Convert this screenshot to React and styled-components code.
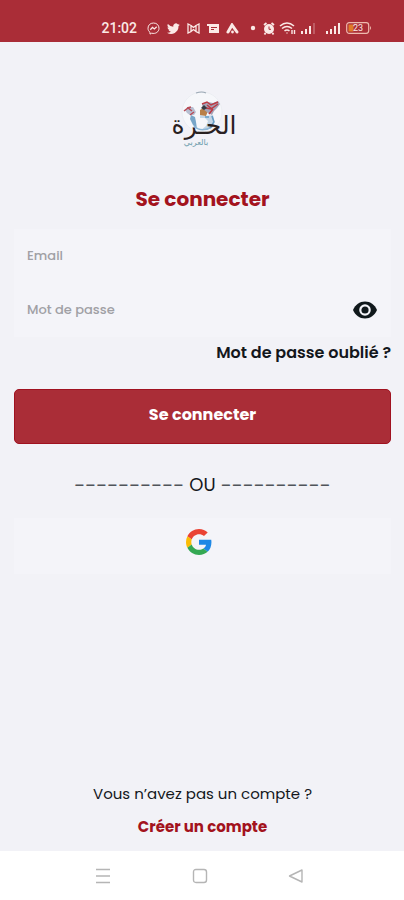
import React, { useState } from "react";
import styled, { createGlobalStyle } from "styled-components";

const GlobalStyle = createGlobalStyle`
  *, *::before, *::after { box-sizing: border-box; }
  body {
    margin: 0;
    background: #f2f2f7;
    color: #14171c;
    font-family: Poppins, Inter, sans-serif;
  }
  button, input { font: inherit; }
`;

const Screen = styled.div`
  display: flex;
  flex-direction: column;
  min-height: 100vh;
`;

const StatusBar = styled.header`
  display: flex;
  align-items: center;
  justify-content: flex-end;
  gap: 8px;
  height: 42px;
  padding: 14px 32px 0 0;
  background: #aa2d37;
  color: #fbe9e6;
`;

const Clock = styled.time`
  margin-right: 2px;
  font-family: Roboto, sans-serif;
  font-size: 14px;
  line-height: 20px;
  font-weight: 500;
`;

const Signals = styled.div`
  display: flex;
  align-items: center;
  gap: ${({ $gap }) => $gap}px;
`;

const Main = styled.main`
  display: flex;
  flex: 1;
  flex-direction: column;
  align-items: center;
  padding: 48px 13px 12px 14px;
`;

const Title = styled.h1`
  margin: 36px 0 15px;
  color: #a3131d;
  font-size: 20px;
  line-height: 30px;
  font-weight: 700;
`;

const Form = styled.form`
  display: flex;
  flex-direction: column;
  width: 100%;
`;

const Field = styled.div`
  display: flex;
  align-items: center;
  height: 54px;
  padding: 0 13px;
  background: #f4f4f9;
`;

const Input = styled.input`
  flex: 1;
  min-width: 0;
  padding: 0;
  border: 0;
  outline: 0;
  background: transparent;
  font-size: 13px;
  line-height: 20px;
  font-weight: 500;
  &::placeholder { color: #a0a0a5; opacity: 1; }
`;

const IconButton = styled.button`
  display: flex;
  padding: 0;
  border: 0;
  background: none;
  color: #10181c;
  cursor: pointer;
`;

const TextLink = styled.a`
  color: ${({ $accent }) => ($accent ? "#a3131d" : "#14171c")};
  font-size: ${({ $accent }) => ($accent ? 15 : 16)}px;
  line-height: 24px;
  font-weight: ${({ $accent }) => ($accent ? 700 : 600)};
  text-decoration: none;
`;

const ForgotRow = styled.div`
  display: flex;
  justify-content: flex-end;
  padding: 4px 0 24px;
`;

const SubmitButton = styled.button`
  height: 55px;
  padding: 0 0 4px;
  border: 1px solid #a01220;
  border-radius: 5px;
  background: #aa2d37;
  color: #fff;
  font-size: 16px;
  font-weight: 700;
  cursor: pointer;
`;

const Separator = styled.p`
  display: flex;
  align-items: center;
  gap: 5px;
  margin: 28px 0 20px;
  font-size: 18px;
  line-height: 26px;
`;

const Dashes = styled.span`
  color: #50545a;
  font-size: 20px;
`;

const GoogleButton = styled.button`
  display: flex;
  align-items: flex-start;
  justify-content: center;
  width: 100%;
  height: 56px;
  padding: 11px 8px 0 0;
  border: 0;
  background: #f4f4f9;
  cursor: pointer;
`;

const Footer = styled.footer`
  display: flex;
  flex-direction: column;
  align-items: center;
  gap: 9px;
  margin-top: auto;
`;

const Question = styled.p`
  margin: 0;
  font-size: 15px;
  line-height: 24px;
`;

const NavBar = styled.nav`
  display: flex;
  align-items: center;
  justify-content: space-between;
  height: 49px;
  padding: 0 100px 0 95px;
  background: #fff;
`;

const NavButton = styled(IconButton)`
  color: #b5b5b5;
`;

const LogoArt = styled.svg`
  display: block;
  overflow: visible;
`;

function Logo() {
  return (
    <LogoArt width="66" height="58" viewBox="0 0 66 58" role="img" aria-label="الحرة بالعربي">
      <circle cx="32" cy="22" r="20" fill="#f6f7fa" stroke="#e6e9ef" strokeWidth="0.6" />
      <path d="M26 3q6-2 10 0" fill="none" stroke="#9ba8b4" strokeWidth="1.2" />
      <path d="M15 20l4-3 4 0 3 5-2 3-4 0-3-2z" fill="#b7bfd1" />
      <path d="M14 21l4-3 4 3M20 25l4-3M17 18l4-1" fill="none" stroke="#b84c57" strokeWidth="1.5" />
      <path d="M21 25l4 2 1 5 1 7-4-4-3-6z" fill="#78a6c8" />
      <path d="M30 25l6 1 7-1 1 5-1 6-6 4-6 0 5-4 2-5-3-3-5 0z" fill="#c3d6e6" />
      <path d="M24 36q7 7 18 1" fill="none" stroke="#8db7d6" strokeWidth="1.5" />
      <path d="M30 20l5-3 3 4-2 5-6-1z" fill="#b98048" />
      <path d="M32 14l6-2 5 1 5-2 2 3-3 4-3 3-2 4-4-2-5-4z" fill="#a5a4b7" />
      <path d="M32 14l5-2 4 3 7-3M36 18l5 1 7-5M39 24l4-5M37 15l5 4" fill="none" stroke="#bd3a43" strokeWidth="1.5" />
      <path d="M42 26l2 6-4 6M35 27l4 0" fill="none" stroke="#659dc5" strokeWidth="1.6" />
      <path d="M31 18l3-3 3 3-3 2z" fill="#363a42" />
      <text x="34" y="44" textAnchor="middle" direction="rtl" fontFamily="DejaVu Sans, sans-serif" fontSize="25" fill="#29211f">الحـرة</text>
      <text x="26" y="55" textAnchor="middle" direction="rtl" fontFamily="DejaVu Sans, sans-serif" fontSize="8" fill="#679aaa">بالعربي</text>
    </LogoArt>
  );
}

function MessengerIcon() {
  return (
    <svg width="13" height="13" viewBox="0 0 13 13" fill="none" stroke="currentColor" aria-hidden="true">
      <path d="M6.500 1C3.200 1 1 3.200 1 6.300c0 1.700.7 3 2 4v1.800l1.700-.9c3.900 1 7.300-1.300 7.300-4.900C12 3.200 9.800 1 6.500 1z" />
      <path d="M3.300 7.800l2.200-2.400 1.900 1.500 2.300-2.100" strokeWidth="1.300" />
    </svg>
  );
}

function TwitterIcon() {
  return (
    <svg width="13" height="13" viewBox="0 0 24 24" fill="currentColor" aria-hidden="true">
      <path d="M23.600 4.900a9.500 9.500 0 0 1-2.700.8 4.800 4.800 0 0 0 2.100-2.700 9.600 9.600 0 0 1-3.100 1.200 4.800 4.800 0 0 0-8.200 4.400A13.700 13.700 0 0 1 1.700 3.600a4.800 4.800 0 0 0 1.500 6.500 4.800 4.800 0 0 1-2.200-.6c0 2.400 1.700 4.400 3.900 4.800a4.800 4.800 0 0 1-2.200.1 4.800 4.800 0 0 0 4.500 3.400A9.700 9.700 0 0 1 0 19.700 13.700 13.700 0 0 0 21.200 7.500a9.800 9.800 0 0 0 2.400-2.600z" />
    </svg>
  );
}

function CutMailIcon() {
  return (
    <svg width="13" height="11" viewBox="0 0 13 11" fill="none" stroke="currentColor" strokeWidth="1.300" aria-hidden="true">
      <path d="M4 2.500L1 1v9l3-1.500zM9 2.500L12 1v9L9 8.500zM4 2.500l2.500 2L9 2.500M4 8.500l2.500-2 2.500 2" />
    </svg>
  );
}

function NewsIcon() {
  return (
    <svg width="12" height="11" viewBox="0 0 12 11" aria-hidden="true">
      <path d="M0 1h12v9H2V3H0z" fill="currentColor" />
      <path d="M4 4.500h6M4 6.500h3" stroke="#aa2d37" strokeWidth="1" />
    </svg>
  );
}

function PeakIcon() {
  return (
    <svg width="13" height="11" viewBox="0 0 13 11" fill="none" stroke="currentColor" strokeLinecap="round" aria-hidden="true">
      <path d="M2 9L6 2l5 7" strokeWidth="3" />
      <circle cx="6.500" cy="9" r="1.400" fill="currentColor" stroke="none" />
    </svg>
  );
}

function DotIcon() {
  return (
    <svg width="12" height="6" viewBox="0 0 12 6" fill="currentColor" aria-hidden="true">
      <circle cx="6" cy="3" r="2.200" />
    </svg>
  );
}

function AlarmIcon() {
  return (
    <svg width="12" height="13" viewBox="0 0 12 13" aria-hidden="true">
      <path d="M1 3l2.500-2M11 3L8.500 1M2.500 11L1.500 12.500M9.500 11l1 1.500" stroke="currentColor" strokeWidth="1.800" />
      <circle cx="6" cy="7" r="5" fill="currentColor" />
      <path d="M6 4.500v2.800h2" fill="none" stroke="#aa2d37" />
    </svg>
  );
}

function WifiIcon() {
  return (
    <svg width="17" height="14" viewBox="0 0 17 14" fill="none" stroke="currentColor" aria-hidden="true">
      <path d="M1 5q7-6 14 0M3 7.500q5-4 10 0M5.500 10q2.500-2 5 0" strokeWidth="1.600" />
      <path d="M8 12.500v-1M13 9v4M15.500 9v4" strokeWidth="1.400" />
    </svg>
  );
}

function BarsIcon({ weak }) {
  return (
    <svg width="17" height="12" viewBox="0 0 17 12" fill="currentColor" aria-hidden="true">
      <path d="M1 9h2v3H1zM5 7h2v5H5zM9 4h2v8H9z" />
      <path d="M13 1h2v11h-2z" opacity={weak ? 0.25 : 1} />
    </svg>
  );
}

function BatteryIcon() {
  return (
    <svg width="26" height="12" viewBox="0 0 26 12" aria-hidden="true">
      <rect x="0.700" y="0.700" width="22" height="10.600" rx="2.500" fill="none" stroke="#eeb9ad" strokeWidth="1.200" />
      <rect x="2.500" y="2.500" width="5" height="7" fill="#e07b27" />
      <path d="M24 4q2 2 0 4z" fill="#eeb9ad" />
      <text x="12" y="9" textAnchor="middle" fill="#fbe9e6" fontFamily="Roboto, sans-serif" fontSize="9">23</text>
    </svg>
  );
}

function EyeIcon() {
  return (
    <svg width="26" height="18" viewBox="0 0 26 18" aria-hidden="true">
      <path d="M1 9C3.500 3.500 7.500.500 13 .500S22.500 3.500 25 9c-2.500 5.500-6.500 8.500-12 8.500S3.500 14.500 1 9z" fill="currentColor" />
      <circle cx="13" cy="9" r="4.700" fill="currentColor" stroke="#f4f4f9" strokeWidth="2.200" />
    </svg>
  );
}

function GoogleIcon() {
  return (
    <svg width="26" height="26" viewBox="0 0 48 48" aria-hidden="true">
      <path fill="#EA4335" d="M24 9.500c3.540 0 6.710 1.220 9.210 3.600l6.850-6.850C35.900 2.380 30.470 0 24 0 14.620 0 6.510 5.380 2.560 13.220l7.980 6.190C12.430 13.720 17.740 9.500 24 9.500z" />
      <path fill="#1E88E5" d="M46.980 24.550c0-1.570-.15-3.090-.38-4.550H24v9.020h12.940c-.58 2.960-2.260 5.480-4.780 7.180l7.730 6c4.510-4.180 7.090-10.360 7.090-17.650z" />
      <path fill="#FBBC05" d="M10.530 28.590A14.500 14.500 0 0 1 9.770 24c0-1.600.27-3.140.76-4.590l-7.980-6.190A23.900 23.900 0 0 0 0 24c0 3.880.92 7.540 2.560 10.780l7.970-6.190z" />
      <path fill="#34A853" d="M24 48c6.480 0 11.930-2.130 15.890-5.810l-7.730-6c-2.150 1.450-4.920 2.300-8.160 2.300-6.260 0-11.570-4.220-13.470-9.910l-7.980 6.190C6.510 42.620 14.620 48 24 48z" />
    </svg>
  );
}

function NavGlyph({ d }) {
  return (
    <svg width="16" height="16" viewBox="0 0 16 16" fill="none" stroke="currentColor" strokeWidth="1.400" strokeLinejoin="round" aria-hidden="true">
      <path d={d} />
    </svg>
  );
}

export default function App() {
  const [visible, setVisible] = useState(false);
  return (
    <Screen>
      <GlobalStyle />
      <StatusBar>
        <Clock>21:02</Clock>
        <Signals $gap={7}>
          <MessengerIcon />
          <TwitterIcon />
          <CutMailIcon />
          <NewsIcon />
          <PeakIcon />
        </Signals>
        <Signals $gap={4}>
          <DotIcon />
          <AlarmIcon />
          <WifiIcon />
          <BarsIcon weak />
        </Signals>
        <Signals $gap={4}>
          <BarsIcon />
          <BatteryIcon />
        </Signals>
      </StatusBar>
      <Main>
        <Logo />
        <Title>Se connecter</Title>
        <Form onSubmit={(event) => event.preventDefault()}>
          <Field>
            <Input type="email" placeholder="Email" aria-label="Email" />
          </Field>
          <Field>
            <Input type={visible ? "text" : "password"} placeholder="Mot de passe" aria-label="Mot de passe" />
            <IconButton type="button" aria-label="Afficher le mot de passe" onClick={() => setVisible(!visible)}>
              <EyeIcon />
            </IconButton>
          </Field>
          <ForgotRow>
            <TextLink href="#oubli">Mot de passe oublié ?</TextLink>
          </ForgotRow>
          <SubmitButton type="submit">Se connecter</SubmitButton>
        </Form>
        <Separator>
          <Dashes>----------</Dashes>
          OU
          <Dashes>----------</Dashes>
        </Separator>
        <GoogleButton type="button" aria-label="Se connecter avec Google">
          <GoogleIcon />
        </GoogleButton>
        <Footer>
          <Question>Vous n’avez pas un compte ?</Question>
          <TextLink href="#inscription" $accent>Créer un compte</TextLink>
        </Footer>
      </Main>
      <NavBar aria-label="Système">
        <NavButton type="button" aria-label="Applications récentes">
          <NavGlyph d="M1 1.500h14M1 8h14M1 14.500h14" />
        </NavButton>
        <NavButton type="button" aria-label="Accueil">
          <NavGlyph d="M4 1.500h8q2.500 0 2.500 2.500v8q0 2.500-2.500 2.500H4q-2.500 0-2.500-2.500V4q0-2.500 2.500-2.500z" />
        </NavButton>
        <NavButton type="button" aria-label="Retour">
          <NavGlyph d="M14 2v12L1.500 8z" />
        </NavButton>
      </NavBar>
    </Screen>
  );
}
